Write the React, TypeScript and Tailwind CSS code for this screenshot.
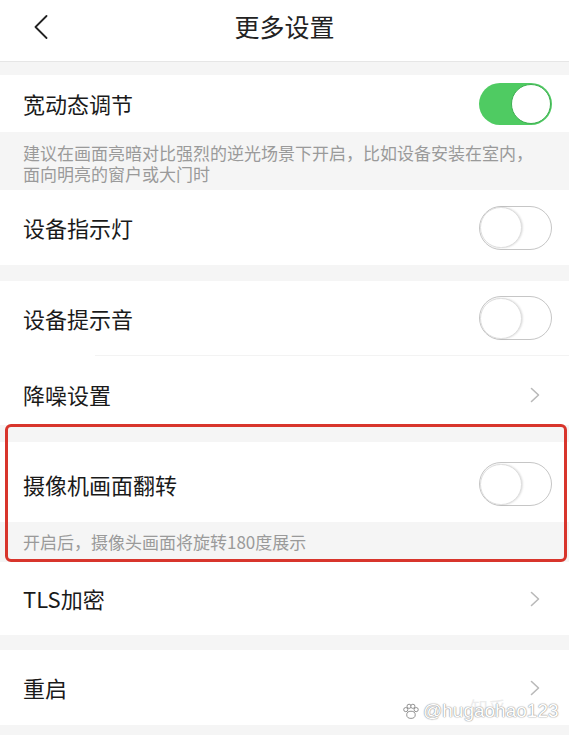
import React from 'react'

const font = "font-['Noto_Sans_CJK_SC','Noto_Sans',sans-serif]"

function Toggle({ on }: { on: boolean }) {
  if (on) {
    return (
      <div className="w-[73px] h-[42px] rounded-full bg-[#4fcb62] flex items-center justify-end pr-[1px]">
        <div className="w-[40px] h-[40px] rounded-full bg-white border-[1.5px] border-[#3eae51]" />
      </div>
    )
  }
  return (
    <div className="w-[73px] h-[44px] rounded-full border-[1.5px] border-[#c6c6c6] bg-white flex items-center">
      <div className="w-[42px] h-[41px] rounded-full bg-white border border-[#dedede] shadow-[1px_0_2px_rgba(0,0,0,0.12)]" />
    </div>
  )
}

function Chevron() {
  return (
    <svg width="10" height="16" viewBox="0 0 10 16" fill="none">
      <path d="M1.5 1.5 L8.5 8 L1.5 14.5" stroke="#b9b9b9" strokeWidth="1.6" strokeLinecap="round" strokeLinejoin="round" />
    </svg>
  )
}

function Row({ title, h, toggle, chevron, className = '' }: {
  title: string
  h: string
  toggle?: boolean
  chevron?: boolean
  className?: string
}) {
  return (
    <div className={`flex items-center justify-between bg-white pl-[23px] ${chevron ? 'pr-[29px]' : 'pr-[17px]'} ${h} ${className}`}>
      <span className="text-[22px] text-[#1a1a1a]">{title}</span>
      {toggle !== undefined && <Toggle on={toggle} />}
      {chevron && <Chevron />}
    </div>
  )
}

export default function App() {
  return (
    <div className={`min-h-screen bg-[#f5f5f5] ${font} relative overflow-hidden`}>
      {/* header */}
      <div className="h-[62px] bg-white border-b border-[#e6e6e6] grid grid-cols-[1fr_auto_1fr] items-center pb-[8px]">
        <div className="pl-[34px] flex items-center">
          <svg width="14" height="24" viewBox="0 0 14 24" fill="none">
            <path d="M12.5 1 L1.5 12 L12.5 23" stroke="#222" strokeWidth="1.8" strokeLinecap="round" strokeLinejoin="round" />
          </svg>
        </div>
        <span className="text-[25px] text-[#222]">更多设置</span>
        <div />
      </div>

      <div className="h-[13px]" />
      <Row title="宽动态调节" h="h-[57px]" toggle={true} />
      <div className="px-[23px] pt-[10px] pb-[6px] text-[17px] leading-[21px] text-[#9a9a9a]">
        建议在画面亮暗对比强烈的逆光场景下开启，比如设备安装在室内，面向明亮的窗户或大门时
      </div>
      <Row title="设备指示灯" h="h-[75px]" toggle={false} />

      <div className="h-[16px]" />
      <Row title="设备提示音" h="h-[74px]" toggle={false} />
      <div className="bg-white pl-[95px]">
        <div className="h-px bg-[#f3f3f3]" />
      </div>
      <Row title="降噪设置" h="h-[69px]" chevron className="pt-[8px]" />

      <div className="relative">
        <div className="h-[17px]" />
        <Row title="摄像机画面翻转" h="h-[80px]" toggle={false} className="pt-[4px]" />
        <div className="h-[40px] px-[23px] pt-[5px] text-[17px] leading-[30px] text-[#9a9a9a]">
          开启后，摄像头画面将旋转180度展示
        </div>
        <div className="absolute top-[-1px] bottom-0 left-[5px] right-[2px] border-[3px] border-[#d8352c] rounded-[6px] pointer-events-none" />
      </div>

      <Row title="TLS加密" h="h-[73px]" chevron />
      <div className="h-[15px]" />
      <Row title="重启" h="h-[75px]" chevron />

      {/* watermark */}
      <div className="absolute left-[470px] top-[694px] text-[18px] text-[#e4e4e4] opacity-70">知乎</div>
      <div className="absolute left-[402px] top-[697px] flex items-center gap-[4px] text-white font-['Liberation_Sans',sans-serif] text-[19px] [text-shadow:0_0_1.5px_#8a8a8a,0_0_1px_#8a8a8a]">
        <svg width="17" height="17" viewBox="0 0 18 18" fill="white" stroke="#8a8a8a" strokeWidth="1">
          <circle cx="4" cy="7" r="2.2" />
          <circle cx="7.5" cy="3.5" r="2.2" />
          <circle cx="11.5" cy="3.5" r="2.2" />
          <circle cx="15" cy="7" r="2.2" />
          <ellipse cx="9.5" cy="12.5" rx="4.5" ry="3.8" />
        </svg>
        <span>@hugaohao123</span>
      </div>
    </div>
  )
}
